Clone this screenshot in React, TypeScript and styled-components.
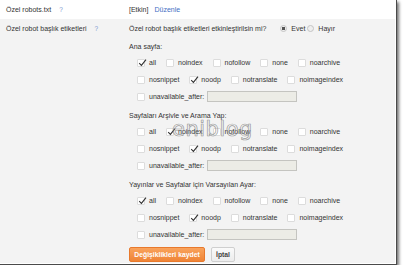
import React from "react";
import styled, { createGlobalStyle } from "styled-components";

const Global = createGlobalStyle`
  html, body { margin: 0; padding: 0; background: #fff; }
  body { font-family: Arial, "Liberation Sans", sans-serif; color: #333; }
`;

const Frame = styled.div`
  position: relative;
  width: 397px;
  height: 265px;
  box-sizing: border-box;
  border-right: 1px solid #4a4a4a;
  border-bottom: 1px solid #4a4a4a;
  box-shadow: 2px 2px 3px rgba(0, 0, 0, 0.55);
  background: #fff;
  overflow: hidden;
  font-size: 7px;
`;

const TopRow = styled.div`
  display: grid;
  grid-template-columns: 123px 1fr;
  align-items: center;
  height: 19px;
  padding-left: 6px;
  width: 395px;
  box-sizing: border-box;
`;

const Section = styled.div`
  display: grid;
  grid-template-columns: 123px 1fr;
  width: 395px;
  height: 244px;
  box-sizing: border-box;
  padding: 1px 0 0 6px;
  background: #f3f3f3;
`;

const LeftLabel = styled.div<{ $h?: number }>`
  height: ${(p) => p.$h ?? 17}px;
  display: flex;
  align-items: center;
  white-space: nowrap;
`;

const Help = styled.span`
  color: #7b9ad0;
  margin-left: 8px;
  font-size: 6.5px;
`;

const Link = styled.span`
  color: #3f6fc4;
  margin-left: 6px;
`;

const Column = styled.div`
  display: flex;
  flex-direction: column;
`;

const Line = styled.div<{ $h?: number; $mt?: number }>`
  height: ${(p) => p.$h ?? 17}px;
  margin-top: ${(p) => p.$mt ?? 0}px;
  display: flex;
  align-items: center;
  white-space: nowrap;
`;

const Row = styled.div`
  height: 17px;
  display: flex;
  align-items: center;
  gap: 10px;
  padding-left: 8px;
  white-space: nowrap;
`;

const Option = styled.label`
  display: flex;
  align-items: center;
  gap: 4px;
`;

const Box = styled.span`
  position: relative;
  width: 8px;
  height: 8px;
  box-sizing: border-box;
  border: 1px solid #dcdcdc;
  border-radius: 1px;
  background: #fff;
  display: inline-block;
`;

const Tick = styled.svg`
  position: absolute;
  left: 0px;
  top: -2px;
  width: 9px;
  height: 9px;
`;

const Radio = styled.span<{ $on?: boolean }>`
  width: 7px;
  height: 7px;
  border-radius: 50%;
  box-sizing: border-box;
  border: 1px solid #c4c4c4;
  background: ${(p) => (p.$on ? "radial-gradient(circle, #555 0 1.6px, #eee 2px)" : "#eee")};
  display: inline-block;
  margin: 0 2px 0 0;
`;

const RadioGroup = styled.div`
  display: flex;
  align-items: center;
  margin-left: 14px;
  gap: 2px;
`;

const DateInput = styled.span`
  display: inline-block;
  width: 90px;
  height: 11px;
  box-sizing: border-box;
  border: 1px solid #c4c4c0;
  background: #ecece6;
  margin-left: -7px;
`;

const Buttons = styled.div`
  display: flex;
  gap: 6px;
  margin-top: 4px;
`;

const SaveButton = styled.button`
  height: 15px;
  width: 76px;
  padding: 0;
  border: 1px solid #e8792c;
  border-radius: 2px;
  background: linear-gradient(#f9a35c, #ef8436);
  color: #fff;
  font-family: Arial, "Liberation Sans", sans-serif;
  font-weight: bold;
  font-size: 6.8px;
`;

const CancelButton = styled.button`
  height: 15px;
  width: 24px;
  padding: 0;
  border: 1px solid #cfcfcf;
  border-radius: 2px;
  background: linear-gradient(#fafafa, #ececec);
  color: #444;
  font-family: Arial, "Liberation Sans", sans-serif;
  font-weight: bold;
  font-size: 6.8px;
`;

const Watermark = styled.div`
  position: absolute;
  left: 172px;
  top: 117px;
  font-family: "DejaVu Sans", sans-serif;
  font-weight: 400;
  font-size: 21px;
  letter-spacing: 0.5px;
  color: rgba(255, 255, 255, 0.15);
  -webkit-text-stroke: 0.7px rgba(120, 120, 120, 0.75);
  pointer-events: none;
`;

const Check = ({ checked, label }: { checked?: boolean; label: string }) => (
  <Option>
    <Box>
      {checked && (
        <Tick viewBox="0 0 9 9">
          <path d="M1.2 5.2 L3.4 7.4 L8 1.6" fill="none" stroke="#333" strokeWidth="1.1" />
        </Tick>
      )}
    </Box>
    {label}
  </Option>
);

const Group = ({
  title,
  first,
  mt,
}: {
  title: string;
  first: { all: boolean; noindex: boolean };
  mt: number;
}) => (
  <>
    <Line $h={15} $mt={mt}>
      {title}
    </Line>
    <Row>
      <Check checked={first.all} label="all" />
      <Check checked={first.noindex} label="noindex" />
      <Check label="nofollow" />
      <Check label="none" />
      <Check label="noarchive" />
    </Row>
    <Row>
      <Check label="nosnippet" />
      <Check checked label="noodp" />
      <Check label="notranslate" />
      <Check label="noimageindex" />
    </Row>
    <Row>
      <Check label="unavailable_after:" />
      <DateInput />
    </Row>
  </>
);

export default function App() {
  return (
    <>
      <Global />
      <Frame>
        <TopRow>
          <LeftLabel $h={19}>
            Özel robots.txt<Help>?</Help>
          </LeftLabel>
          <LeftLabel $h={19}>
            [Etkin]<Link>Düzenle</Link>
          </LeftLabel>
        </TopRow>
        <Section>
          <LeftLabel>
            Özel robot başlık etiketleri<Help>?</Help>
          </LeftLabel>
          <Column>
            <Line>
              Özel robot başlık etiketleri etkinleştirilsin mi?
              <RadioGroup>
                <Radio $on />
                Evet
                <Radio />
                Hayır
              </RadioGroup>
            </Line>
            <Group title="Ana sayfa:" first={{ all: true, noindex: false }} mt={2} />
            <Group title="Sayfaları Arşivle ve Arama Yap:" first={{ all: false, noindex: true }} mt={3} />
            <Group title="Yayınlar ve Sayfalar için Varsayılan Ayar:" first={{ all: true, noindex: false }} mt={3} />
            <Buttons>
              <SaveButton>Değişiklikleri kaydet</SaveButton>
              <CancelButton>İptal</CancelButton>
            </Buttons>
          </Column>
        </Section>
        <Watermark>eniblog</Watermark>
      </Frame>
    </>
  );
}
